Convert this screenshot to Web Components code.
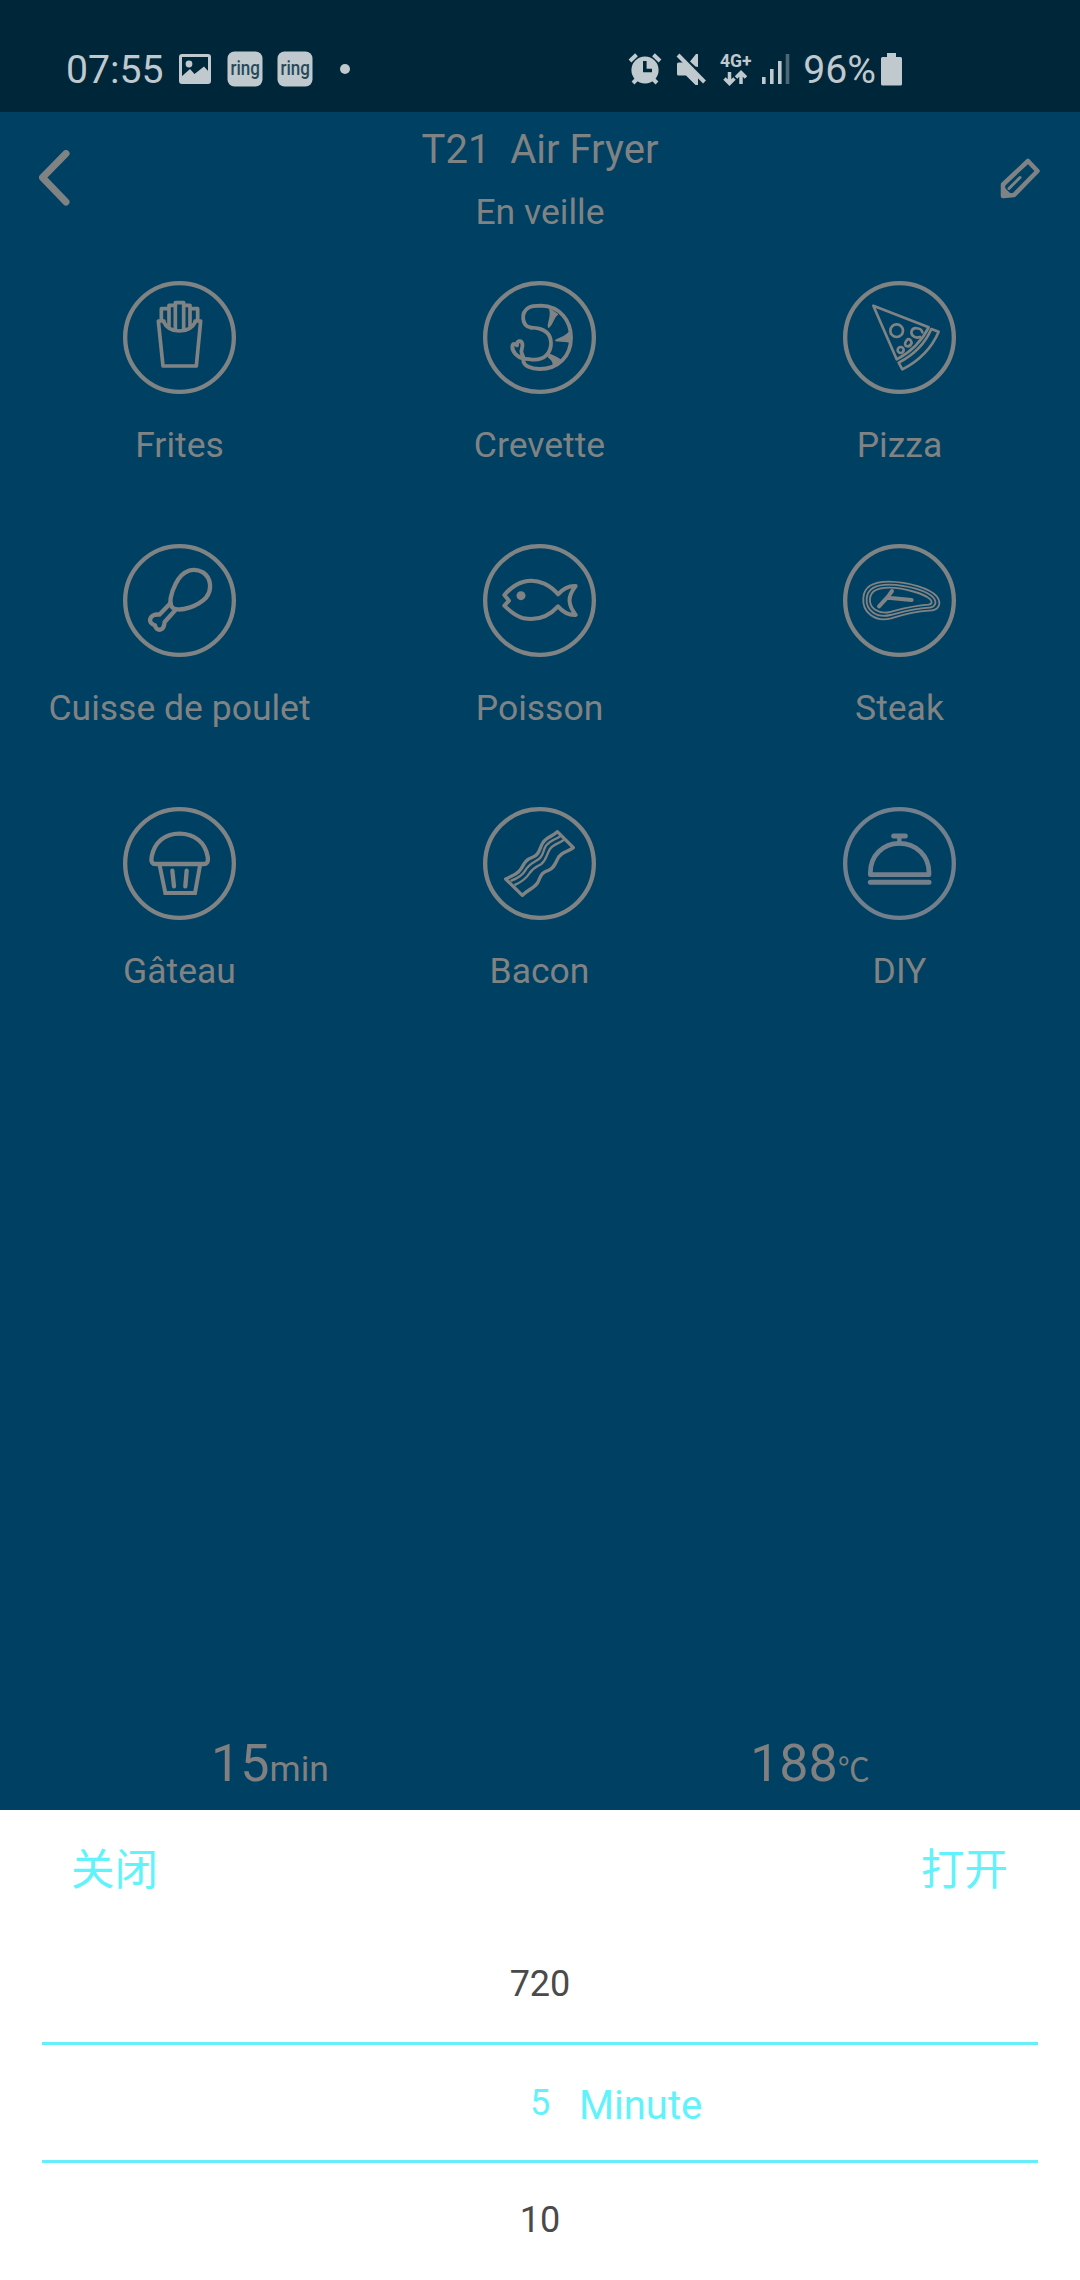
<!DOCTYPE html>
<html lang="fr">
<head>
<meta charset="UTF-8">
<title>T21 Air Fryer</title>
<style>
  body {
    margin: 0;
    background: #004062;
    font-family: Roboto, "Noto Sans CJK SC", sans-serif;
  }
</style>
</head>
<body>
<fryer-app></fryer-app>

<script>
const icons = {
  fries: {
    top: 51,
    art: `
      <g stroke-width="11">
        <path d="M192 183H175L189 318H289L302 183H285"/>
        <path d="M190 184Q204 213 238 213Q273 213 287 184"/>
        <path d="M184 180V146H206M207 198V136H226M226 208V128H251V208M251 136H270V198M271 146H293V180"/>
      </g>`
  },
  shrimp: {
    top: 51,
    art: `
      <g stroke-width="11.500">
        <path d="M213 203C185 199 181 158 206 143C216 137 230 137 243 137C300 139 333 181 333 233C333 289 294 327 239 327C213 327 191 318 190 302"/>
        <path d="M213 203C250 204 273 219 273 250C273 281 251 299 224 299C208 299 200 295 192 297C172 292 156 276 157 258C160 248 168 253 171 256C170 241 184 240 187 251C190 265 181 269 185 279L192 297"/>
      </g>
      <g fill="currentColor" stroke-width="5">
        <path d="M270 148L292 163C277 172 281 190 266 201C262 190 277 172 270 148Z"/>
        <path d="M333 210V247C318 240 300 244 288 241C299 232 318 236 333 210Z"/>
        <path d="M268 284C279 287 289 293 304 302L280 314C282 303 274 298 266 291Z"/>
      </g>`
  },
  pizza: {
    top: 51,
    art: `
      <g stroke-width="8">
        <path d="M160 137L326 202Q295 264 230 298Z"/>
        <path d="M334 207L356 215Q325 288 247 328L236 308Q306 272 334 207Z"/>
        <circle cx="230" cy="212" r="19"/>
        <path d="M307 217C304 202 276 199 274 217C274 228 287 236 300 231"/>
        <path d="M264 237Q273 237 275 249Q270 262 258 258Q250 250 264 237Z"/>
        <circle cx="242" cy="270" r="9"/>
      </g>`
  },
  drumstick: {
    top: 30,
    art: `
      <g stroke-width="13" transform="translate(-180 0)">
        <path d="M399 234C384 224 393 188 407 161C429 118 462 112 489 127C514 144 517 179 498 203C474 228 421 247 399 234Z"/>
        <path d="M392 219L358 254C345 252 332 256 330 270C330 280 339 284 345 286C346 295 353 300 361 299C371 297 373 287 374 276L408 238"/>
      </g>`
  },
  fish: {
    top: 30,
    art: `
      <path stroke-width="12" d="M133 195C169 152 213 143 253 161C270 169 284 181 294 193C309 176 326 167 347 168C323 199 322 221 347 255C326 256 307 244 294 229C264 262 229 272 191 265C170 259 149 243 133 227L147 212Z"/>
      <circle cx="183" cy="197" r="13.5" fill="currentColor" stroke="none"/>`
  },
  steak: {
    top: 30,
    art: `
      <g stroke-width="5.500">
        <path d="M130 204C132 165 171 155 207 155C265 156 330 175 351 200C365 220 358 242 327 242C278 245 246 255 213 265C165 278 126 246 130 204Z"/>
        <path d="M140 205C143 174 174 164 207 164C260 165 322 182 341 204C352 218 345 232 327 233C278 236 246 246 211 255C170 265 137 241 140 205Z"/>
        <path d="M150 206C152 182 177 173 207 173C254 174 313 191 331 208C338 216 336 223 325 224C280 227 244 237 209 246C175 253 147 235 150 206Z"/>
      </g>
      <path stroke-width="12" d="M177 229L204 200L216 183M204 203L275 210"/>`
  },
  muffin: {
    top: 39,
    art: `
      <path stroke-width="13" d="M169 222C157 223 152 216 155 200C163 158 193 131 238 131C284 131 316 158 323 200C326 216 320 223 309 222Z"/>
      <path stroke-width="12" stroke-linejoin="miter" d="M179 226L196 309H285L300 226"/>
      <path stroke-width="13" d="M217 242L222 289M260 242L256 289"/>`
  },
  bacon: {
    top: 39,
    art: `
      <path stroke-width="10" d="M137 267C161 256 174 251 184 235C194 217 199 208 219 201C238 195 238 176 248 159C258 141 279 139 292 125L340 173C322 187 307 184 296 201C286 219 283 235 265 241C244 247 242 259 234 276C226 293 203 299 187 316Z"/>
      <path stroke-width="7" d="M154 272C177 263 188 255 196 241C207 222 219 218 231 211C252 200 247 184 258 167C270 151 286 149 300 139"/>
      <path stroke-width="7" d="M166 284C187 275 199 265 209 249C220 233 233 229 244 222C260 209 259 193 270 177C278 164 297 160 310 151"/>`
  },
  cloche: {
    top: 39,
    art: `
      <path stroke-width="14" d="M151 254V248C151 198 188 160 238 160C289 160 327 198 327 248V254Z"/>
      <path stroke-width="15" d="M151 277H327"/>
      <path stroke-width="15" d="M221 138H256"/>
      <path stroke-width="13" d="M238 140V160"/>`
  }
};

class StatusBar extends HTMLElement {
  constructor() {
    super();
    this.attachShadow({ mode: 'open' });
  }

  connectedCallback() {
    const ring = `
      <svg class="ring" width="36" height="36" viewBox="0 0 36 36">
        <rect x=".5" y=".5" width="35" height="35" rx="7" fill="#bfc9ce"/>
        <text transform="translate(3.5 23.5) scale(.85 1)" font-size="20" font-weight="500" fill="#28495a">ring</text>
      </svg>`;

    this.shadowRoot.innerHTML = `
      <style>
        :host {
          display: flex;
          align-items: center;
          box-sizing: border-box;
          height: 112px;
          padding: 25px 178px 0 66px;
          background: #00263a;
          color: #bfc9ce;
          font-size: 39.2px;
          line-height: 48px;
        }
        svg { display: block; flex: none; overflow: visible; }
        .time, .percent { padding-top: 2px; }
        .picture { margin-left: 15px; }
        .ring { margin-left: 16px; }
        .ring + .ring { margin-left: 14px; }
        .dot {
          width: 10px;
          height: 10px;
          margin-left: 27px;
          border-radius: 50%;
          background: currentColor;
        }
        .system {
          display: flex;
          align-items: center;
          margin-left: auto;
        }
        .mute { margin-left: 14px; }
        .network { margin-left: 13px; }
        .signal { margin-left: 8px; }
        .percent { margin-left: 13px; }
        .battery { margin-left: 5px; }
      </style>
      <span class="time">07:55</span>
      <svg class="picture" width="32" height="30" viewBox="0 0 32 30">
        <rect x="1.5" y="1.5" width="29" height="27" rx="1.5" fill="none" stroke="currentColor" stroke-width="3"/>
        <circle cx="10" cy="10" r="3.4" fill="currentColor"/>
        <path d="M2 23L11 15L15.500 20L25 12.500L30 18V28H2Z" fill="currentColor"/>
      </svg>
      ${ring}${ring}
      <span class="dot"></span>
      <div class="system">
        <svg width="34" height="34" viewBox="0 0 34 34">
          <circle cx="17" cy="18" r="13.600" fill="currentColor"/>
          <path d="M2 9L8.500 2.800M25.500 2.800L32 9M5 31L9 27M29 31L25 27" stroke="currentColor" stroke-width="4"/>
          <path d="M16.800 9V18.500H24" fill="none" stroke="#00263a" stroke-width="3.600"/>
        </svg>
        <svg class="mute" width="31" height="34" viewBox="0 0 31 34">
          <path d="M2.500 10.500H8L22 25V33H19.500L10 23.500H2.500Q1 23.500 1 22V12Q1 10.500 2.500 10.500ZM14 9.500L20 2H22V15L19.500 14.500Z" fill="currentColor"/>
          <path d="M2 3L28.500 30" stroke="currentColor" stroke-width="4"/>
        </svg>
        <svg class="network" width="34" height="38" viewBox="0 -2 34 38">
          <text x="0" y="15" font-size="17.500" font-weight="700" fill="currentColor">4G+</text>
          <path d="M9.500 20V31M4.500 26.500L9.500 31.500L14.500 26.500M21 32V21M16 25.500L21 20.500L26 25.500" fill="none" stroke="currentColor" stroke-width="3.500"/>
        </svg>
        <svg class="signal" width="28" height="32" viewBox="0 0 28 32">
          <path d="M1.800 24V31M9.800 16V31M17.800 8V31" stroke="currentColor" stroke-width="3.600"/>
          <path d="M25.500 1V31" stroke="currentColor" stroke-width="3.600" opacity=".4"/>
        </svg>
        <span class="percent">96%</span>
        <svg class="battery" width="21" height="34" viewBox="0 0 21 34">
          <path d="M6 1H15V5H19.500Q21 5 21 6.500V32Q21 33.500 19.500 33.500H1.500Q0 33.500 0 32V6.500Q0 5 1.500 5H6Z" fill="currentColor"/>
        </svg>
      </div>
    `;
  }
}

class AppHeader extends HTMLElement {
  constructor() {
    super();
    this.attachShadow({ mode: 'open' });
    this.shadowRoot.innerHTML = `
      <style>
        :host {
          display: grid;
          grid-template-columns: 1fr auto 1fr;
          box-sizing: border-box;
          height: 165px;
          padding: 14px 39px 0;
          color: #808384;
        }
        svg { display: block; margin-top: 24px; }
        .edit { justify-self: end; margin-top: 32px; }
        .titles { text-align: center; }
        .title {
          font-size: 40px;
          line-height: 48px;
          white-space: pre;
        }
        .state {
          margin-top: 17px;
          font-size: 35.5px;
          line-height: 42px;
        }
      </style>
      <svg width="31" height="56" viewBox="0 0 31 56">
        <path d="M27 3.500L3.500 27.500L27 52" fill="none" stroke="currentColor" stroke-width="7" stroke-linecap="round" stroke-linejoin="round"/>
      </svg>
      <div class="titles">
        <div class="title"><slot name="title"></slot></div>
        <div class="state"><slot name="state"></slot></div>
      </div>
      <svg class="edit" width="41" height="41" viewBox="0 0 41 41">
        <path d="M28 3L37.500 13L14 37L3 38V26.500Z" fill="none" stroke="currentColor" stroke-width="4.500" stroke-linejoin="round"/>
        <path d="M3 28L13 38L1 39Z" fill="currentColor"/>
        <path d="M9 30.500L20 19.500" stroke="currentColor" stroke-width="3" stroke-linecap="round"/>
      </svg>
    `;
  }
}

class FoodPreset extends HTMLElement {
  constructor() {
    super();
    this.attachShadow({ mode: 'open' });
  }

  connectedCallback() {
    const icon = icons[this.getAttribute('icon')];

    this.shadowRoot.innerHTML = `
      <style>
        :host {
          display: flex;
          flex-direction: column;
          align-items: center;
          height: 263px;
          color: #808384;
        }
        :host([icon="cloche"]) svg { color: #71808c; }
        svg {
          display: block;
          fill: none;
          stroke: currentColor;
          stroke-linecap: round;
          stroke-linejoin: round;
        }
        .label {
          margin: 27px 1px 0 0;
          font-size: 35.5px;
          line-height: 42px;
          white-space: nowrap;
        }
      </style>
      <svg width="160" height="120" viewBox="0 ${icon.top} 480 360">
        <circle cx="238.500" cy="${icon.top + 181.5}" r="163" stroke-width="13"/>
        ${icon.art}
      </svg>
      <div class="label"><slot></slot></div>
    `;
  }
}

class CookReading extends HTMLElement {
  constructor() {
    super();
    this.attachShadow({ mode: 'open' });
    this.shadowRoot.innerHTML = `
      <style>
        :host {
          display: flex;
          justify-content: center;
          align-items: baseline;
          flex: 1;
          color: #808080;
          font-size: 52px;
          line-height: 60px;
        }
        .unit { font-size: 35.5px; }
        :host([kind="temperature"]) .unit {
          font-family: "Noto Sans CJK SC", sans-serif;
          font-size: 32px;
        }
      </style>
      <slot></slot><span class="unit"><slot name="unit"></slot></span>
    `;
  }
}

class TimePicker extends HTMLElement {
  constructor() {
    super();
    this.attachShadow({ mode: 'open' });
    this.shadowRoot.innerHTML = `
      <style>
        :host {
          display: block;
          box-sizing: border-box;
          height: 470px;
          padding: 0 42px;
          overflow: hidden;
          background: #fff;
          color: #4a4a4a;
          font-size: 36px;
        }
        .actions {
          display: flex;
          justify-content: space-between;
          box-sizing: border-box;
          height: 115px;
          padding: 30px 30px 0 29px;
          color: #60f3fc;
          font-size: 43.5px;
          line-height: 62px;
        }
        .row {
          display: grid;
          grid-template-columns: 1fr auto 1fr;
          align-items: center;
          height: 118px;
        }
        .value { grid-column: 2; }
        .selected {
          box-sizing: border-box;
          height: 121px;
          margin: -1px 0 -2px;
          border: solid #66eefa;
          border-width: 3px 0;
          color: #60f3fc;
        }
        .unit {
          padding: 5px 0 0 29px;
          font-size: 40px;
        }
      </style>
      <div class="actions">
        <slot name="close"></slot>
        <slot name="open"></slot>
      </div>
      <div class="row"><span class="value"><slot name="previous"></slot></span></div>
      <div class="row selected">
        <span class="value"><slot name="current"></slot></span>
        <span class="unit"><slot name="unit"></slot></span>
      </div>
      <div class="row"><span class="value"><slot name="next"></slot></span></div>
    `;
  }
}

class FryerApp extends HTMLElement {
  constructor() {
    super();
    this.attachShadow({ mode: 'open' });
    this.shadowRoot.innerHTML = `
      <style>
        :host {
          display: flex;
          flex-direction: column;
          width: 1080px;
          height: 2280px;
          overflow: hidden;
        }
        .presets {
          display: grid;
          grid-template-columns: repeat(3, 360px);
        }
        .readings {
          display: flex;
          margin-top: auto;
          padding-bottom: 11px;
        }
      </style>
      <status-bar></status-bar>
      <app-header>
        <span slot="title">T21  Air Fryer</span>
        <span slot="state">En veille</span>
      </app-header>
      <div class="presets">
        <food-preset icon="fries">Frites</food-preset>
        <food-preset icon="shrimp">Crevette</food-preset>
        <food-preset icon="pizza">Pizza</food-preset>
        <food-preset icon="drumstick">Cuisse de poulet</food-preset>
        <food-preset icon="fish">Poisson</food-preset>
        <food-preset icon="steak">Steak</food-preset>
        <food-preset icon="muffin">Gâteau</food-preset>
        <food-preset icon="bacon">Bacon</food-preset>
        <food-preset icon="cloche">DIY</food-preset>
      </div>
      <div class="readings">
        <cook-reading kind="time">15<span slot="unit">min</span></cook-reading>
        <cook-reading kind="temperature">188<span slot="unit">℃</span></cook-reading>
      </div>
      <time-picker>
        <span slot="close">关闭</span>
        <span slot="open">打开</span>
        <span slot="previous">720</span>
        <span slot="current">5</span>
        <span slot="unit">Minute</span>
        <span slot="next">10</span>
      </time-picker>
    `;
  }
}

customElements.define('status-bar', StatusBar);
customElements.define('app-header', AppHeader);
customElements.define('food-preset', FoodPreset);
customElements.define('cook-reading', CookReading);
customElements.define('time-picker', TimePicker);
customElements.define('fryer-app', FryerApp);
</script>
</body>
</html>
